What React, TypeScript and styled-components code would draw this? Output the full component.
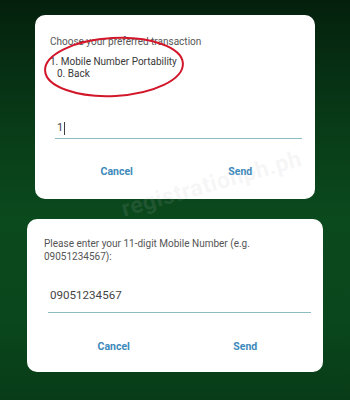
import React from 'react';
import styled, { createGlobalStyle } from 'styled-components';

const GlobalStyle = createGlobalStyle`
    html, body {
        margin: 0;
        padding: 0;
    }
    body {
        width: 350px;
        height: 400px;
        overflow: hidden;
        font-family: Roboto, 'Liberation Sans', sans-serif;
    }
`;

const Screen = styled.div`
    position: relative;
    width: 350px;
    height: 400px;
    display: flex;
    flex-direction: column;
    background: linear-gradient(180deg, #04200d 0%, #083a17 30%, #0b4a1d 55%, #0a471c 80%, #083c18 100%);
    overflow: hidden;
`;

const Dialog = styled.div<{ $left: number; $top: number; $width: number; $height: number }>`
    box-sizing: border-box;
    margin-left: ${p => p.$left}px;
    margin-top: ${p => p.$top}px;
    width: ${p => p.$width}px;
    height: ${p => p.$height}px;
    background: #ffffff;
    border-radius: 10px;
    position: relative;
    display: flex;
    flex-direction: column;
`;

const Prompt = styled.div<{ $padLeft: number; $padTop: number }>`
    padding: ${p => p.$padTop}px 12px 0 ${p => p.$padLeft}px;
    font-size: 10px;
    line-height: 13px;
    color: #555555;
`;

const Options = styled.div`
    margin-top: 8px;
    padding-left: 15px;
    font-size: 10px;
    line-height: 12px;
    color: #393939;
`;

const Option = styled.div<{ $indent?: number }>`
    padding-left: ${p => p.$indent || 0}px;
`;

const InputLine = styled.div<{ $top: number; $left: number; $right: number; $size: number; $padBottom: number }>`
    margin: ${p => p.$top}px ${p => p.$right}px 0 ${p => p.$left}px;
    padding: 0 0 ${p => p.$padBottom}px 2px;
    border-bottom: 1.5px solid #8dbcc4;
    font-size: ${p => p.$size}px;
    line-height: 16px;
    color: #454545;
    display: flex;
    align-items: center;
`;

const Caret = styled.span`
    display: inline-block;
    width: 1px;
    height: 13px;
    margin-left: 1px;
    background: #3f3f3f;
`;

const Actions = styled.div<{ $top: number; $left: number; $right: number }>`
    margin: ${p => p.$top}px ${p => p.$right}px 0 ${p => p.$left}px;
    display: grid;
    grid-template-columns: 1fr 1fr;
    height: 22px;
`;

const ActionButton = styled.button`
    border: none;
    background: transparent;
    font-family: Roboto, 'Liberation Sans', sans-serif;
    font-size: 10.5px;
    font-weight: 700;
    color: #3d89bb;
    padding: 0;
    cursor: pointer;
`;

const Highlight = styled.svg`
    position: absolute;
    left: 8px;
    top: 5px;
    overflow: visible;
`;

const Watermark = styled.div`
    position: absolute;
    left: 122px;
    top: 196px;
    transform: rotate(-16deg);
    transform-origin: left center;
    font-family: Roboto, 'Liberation Sans', sans-serif;
    font-size: 23px;
    font-weight: 700;
    letter-spacing: 0.5px;
    color: rgba(185, 190, 195, 0.14);
    white-space: nowrap;
    pointer-events: none;
`;

const App: React.FC = () => {
    return (
        <>
            <GlobalStyle />
            <Screen>
                <Dialog $left={35} $top={15} $width={280} $height={184}>
                    <Prompt $padLeft={15} $padTop={20}>
                        Choose your preferred transaction
                    </Prompt>
                    <Options>
                        <Option>1. Mobile Number Portability</Option>
                        <Option $indent={7}>0. Back</Option>
                    </Options>
                    <InputLine $top={40} $left={20} $right={13} $size={11} $padBottom={2}>
                        1<Caret />
                    </InputLine>
                    <Actions $top={21} $left={20} $right={13}>
                        <ActionButton>Cancel</ActionButton>
                        <ActionButton>Send</ActionButton>
                    </Actions>
                    <Highlight width="150" height="70" viewBox="0 0 150 70">
                        <ellipse
                            cx="71"
                            cy="47"
                            rx="69"
                            ry="29"
                            transform="rotate(-3 71 47)"
                            fill="none"
                            stroke="#d3172b"
                            strokeWidth="2"
                        />
                    </Highlight>
                </Dialog>
                <Dialog $left={27} $top={20} $width={296} $height={153}>
                    <Prompt $padLeft={17} $padTop={18}>
                        Please enter your 11-digit Mobile Number (e.g.
                        <br />
                        09051234567):
                    </Prompt>
                    <InputLine $top={24} $left={21} $right={12} $size={11.6} $padBottom={9}>
                        09051234567
                    </InputLine>
                    <Actions $top={22} $left={21} $right={12}>
                        <ActionButton>Cancel</ActionButton>
                        <ActionButton>Send</ActionButton>
                    </Actions>
                </Dialog>
                <Watermark>registrationph.ph</Watermark>
            </Screen>
        </>
    );
};

export default App;
